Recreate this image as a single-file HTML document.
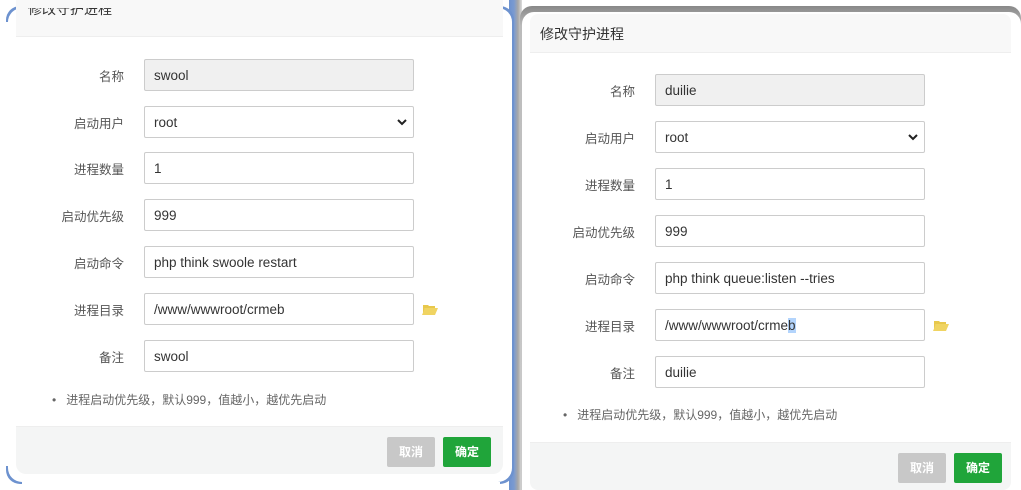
<!DOCTYPE html>
<html><head><meta charset="utf-8"><style>
*{box-sizing:border-box;margin:0;padding:0}
body{width:1021px;height:490px;overflow:hidden;background:#fff;font-family:"Liberation Sans","Noto Sans CJK SC",sans-serif;font-size:13px;color:#333;position:relative}
.a{position:absolute}
.lbl{position:absolute;width:120px;text-align:right;font-size:12.5px;color:#555}
.in{position:absolute;width:270px;height:32px;border:1px solid #ccc;border-radius:2px;background:#fff;padding-left:9px;line-height:31px;font-size:13.5px;color:#333}
.in.g{background:#f0f0f0}
.btn{position:absolute;width:48px;height:30px;border-radius:2px;color:#fff;font-size:12px;font-weight:bold;text-align:center;line-height:30px}
.c{background:#c8c8c8}.o{background:#20a53a}
.note{position:absolute;font-size:12px;color:#666}
.fold{position:absolute;width:16px;height:11px}
.ar{position:absolute;right:5px;top:11px;width:12px;height:8px}
</style></head><body>
<!-- left panel -->
<div class="a" style="left:509px;top:0;width:13px;height:490px;background:linear-gradient(90deg,#6d92cf 0,#7a9ad0 5px,#a8a8a8 9px,#ddd 13px)"></div>
<div class="a" style="left:6px;top:6px;width:508px;height:478px;background:#6d92cf;border-radius:14px"></div>
<div class="a" style="left:0;top:22px;width:16px;height:444px;background:#fff"></div>
<div class="a" style="left:22px;top:482px;width:478px;height:8px;background:#fff"></div>
<div class="a" style="left:8px;top:8px;width:504px;height:474px;background:#fff;border-radius:14px"></div>
<div class="a" style="left:16px;top:0;width:487px;height:37px;background:#f8f8f8;border-bottom:1px solid #eee"></div>
<div class="a" style="left:28px;top:8px;font-size:14px;color:#333;line-height:16px;height:10px;overflow:hidden;"><span style="position:relative;top:-7px">修改守护进程</span></div>
<div class="lbl" style="left:4px;top:66px">名称</div><div class="in g" style="left:144px;top:59px">swool</div>
<div class="lbl" style="left:4px;top:113px">启动用户</div><div class="in" style="left:144px;top:106px">root<svg class="ar" viewBox="0 0 12 8"><path d="M2 2l4 4 4-4" stroke="#222" stroke-width="2" fill="none"/></svg></div>
<div class="lbl" style="left:4px;top:159px">进程数量</div><div class="in" style="left:144px;top:152px">1</div>
<div class="lbl" style="left:4px;top:206px">启动优先级</div><div class="in" style="left:144px;top:199px">999</div>
<div class="lbl" style="left:4px;top:253px">启动命令</div><div class="in" style="left:144px;top:246px">php think swoole restart</div>
<div class="lbl" style="left:4px;top:300px">进程目录</div><div class="in" style="left:144px;top:293px">/www/wwwroot/crmeb</div>
<svg class="fold" style="left:422px;top:304px" viewBox="0 0 16 11"><path d="M1 1h5l1 1h6v2H3L1 10z" fill="#e8c84c"/><path d="M3 4h13l-3 7H0z" fill="#f0d462"/></svg>
<div class="lbl" style="left:4px;top:347px">备注</div><div class="in" style="left:144px;top:340px">swool</div>
<div class="note" style="left:52px;top:391px">•&nbsp;&nbsp;&nbsp;进程启动优先级，默认999，值越小，越优先启动</div>
<div class="a" style="left:16px;top:426px;width:487px;height:48px;background:#f4f5f5;border-top:1px solid #eee;border-radius:0 0 10px 10px"></div>
<div class="btn c" style="left:387px;top:437px">取消</div><div class="btn o" style="left:443px;top:437px">确定</div>
<!-- right panel -->
<div class="a" style="left:520px;top:6px;width:501px;height:484px;background:linear-gradient(180deg,#888,#bbb 20px,#ccc);border-radius:12px 12px 0 0"></div>
<div class="a" style="left:522px;top:12px;width:499px;height:478px;background:#fff;border-radius:12px 12px 0 0"></div>
<div class="a" style="left:530px;top:14px;width:481px;height:39px;background:#f8f8f8;border-bottom:1px solid #eee;border-radius:8px 8px 0 0"></div>
<div class="a" style="left:540px;top:24px;font-size:14px;color:#333">修改守护进程</div>
<div class="lbl" style="left:515px;top:81px">名称</div><div class="in g" style="left:655px;top:74px">duilie</div>
<div class="lbl" style="left:515px;top:128px">启动用户</div><div class="in" style="left:655px;top:121px">root<svg class="ar" viewBox="0 0 12 8"><path d="M2 2l4 4 4-4" stroke="#222" stroke-width="2" fill="none"/></svg></div>
<div class="lbl" style="left:515px;top:175px">进程数量</div><div class="in" style="left:655px;top:168px">1</div>
<div class="lbl" style="left:515px;top:222px">启动优先级</div><div class="in" style="left:655px;top:215px">999</div>
<div class="lbl" style="left:515px;top:269px">启动命令</div><div class="in" style="left:655px;top:262px">php think queue:listen --tries</div>
<div class="lbl" style="left:515px;top:316px">进程目录</div><div class="in" style="left:655px;top:309px">/www/wwwroot/crme<span style="background:#b3d4fc">b</span></div>
<svg class="fold" style="left:933px;top:320px" viewBox="0 0 16 11"><path d="M1 1h5l1 1h6v2H3L1 10z" fill="#e8c84c"/><path d="M3 4h13l-3 7H0z" fill="#f0d462"/></svg>
<div class="lbl" style="left:515px;top:363px">备注</div><div class="in" style="left:655px;top:356px">duilie</div>
<div class="note" style="left:563px;top:406px">•&nbsp;&nbsp;&nbsp;进程启动优先级，默认999，值越小，越优先启动</div>
<div class="a" style="left:530px;top:442px;width:481px;height:48px;background:#f4f5f5;border-top:1px solid #eee;border-radius:0 0 8px 8px"></div>
<div class="btn c" style="left:898px;top:453px">取消</div><div class="btn o" style="left:954px;top:453px">确定</div>
</body></html>
